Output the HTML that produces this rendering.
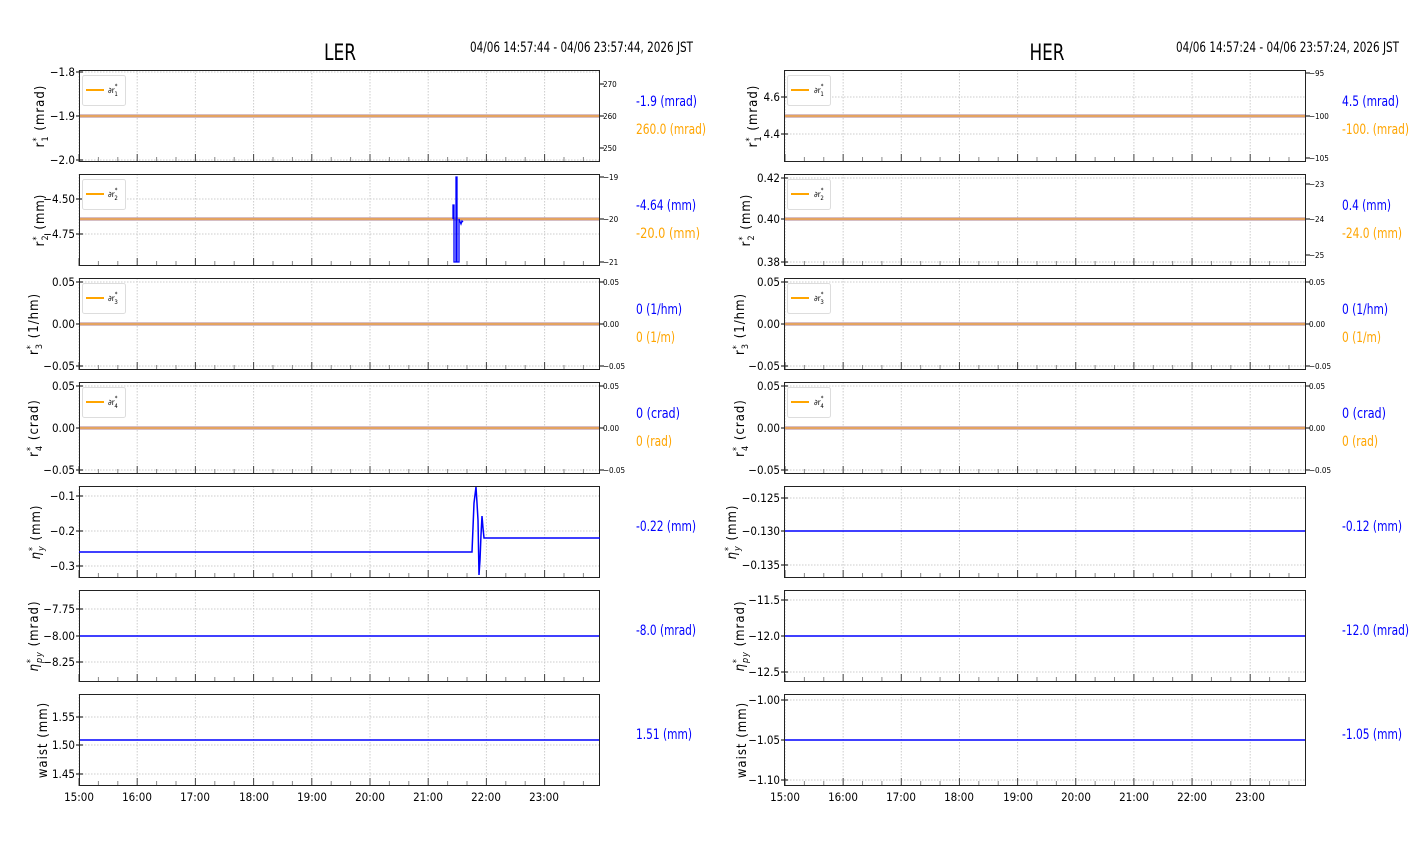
<!DOCTYPE html>
<html><head><meta charset="utf-8"><style>
html,body{margin:0;padding:0;background:#fff;}
svg{display:block;}
text{font-family:"DejaVu Sans Condensed","Liberation Sans Narrow","Liberation Sans",sans-serif;}
.t{font-size:11.5px;fill:#000;}
.s{font-size:8px;fill:#000;}
.yl{font-family:"DejaVu Sans","Liberation Sans",sans-serif;font-size:13px;letter-spacing:1px;}
.vb{font-size:14px;fill:#0000ff;}
.vo{font-size:14px;fill:#ffa500;}
.ttl{font-size:22px;}
.rng{font-size:14px;}
</style></head><body>
<svg id="s" width="1412" height="864" viewBox="0 0 1412 864" xmlns="http://www.w3.org/2000/svg">
<g id="g"></g>
<text class="ttl" x="340" y="60" text-anchor="middle" textLength="32" lengthAdjust="spacingAndGlyphs">LER</text>
<text class="rng" x="470" y="52" textLength="223" lengthAdjust="spacingAndGlyphs">04/06 14:57:44 - 04/06 23:57:44, 2026 JST</text>
<text class="ttl" x="1047" y="60" text-anchor="middle" textLength="35" lengthAdjust="spacingAndGlyphs">HER</text>
<text class="rng" x="1176" y="52" textLength="223" lengthAdjust="spacingAndGlyphs">04/06 14:57:24 - 04/06 23:57:24, 2026 JST</text>

<g class="t" text-anchor="end">
<text x="75" y="76">−1.8</text><text x="75" y="120">−1.9</text><text x="75" y="164">−2.0</text>
<text x="75" y="203">−4.50</text><text x="75" y="238">−4.75</text>
<text x="75" y="286">0.05</text><text x="75" y="328">0.00</text><text x="75" y="370">−0.05</text>
<text x="75" y="390">0.05</text><text x="75" y="432">0.00</text><text x="75" y="474">−0.05</text>
<text x="75" y="500">−0.1</text><text x="75" y="535">−0.2</text><text x="75" y="570">−0.3</text>
<text x="75" y="613">−7.75</text><text x="75" y="640">−8.00</text><text x="75" y="666">−8.25</text>
<text x="75" y="721">1.55</text><text x="75" y="749">1.50</text><text x="75" y="778">1.45</text>
</g>
<g class="s">
<text x="603" y="87">270</text><text x="603" y="119">260</text><text x="603" y="151">250</text>
<text x="603" y="180">−19</text><text x="603" y="222">−20</text><text x="603" y="265">−21</text>
<text x="603" y="285">0.05</text><text x="603" y="327">0.00</text><text x="603" y="369">−0.05</text>
<text x="603" y="389">0.05</text><text x="603" y="431">0.00</text><text x="603" y="473">−0.05</text>
</g>
<g class="t" text-anchor="end">
<text x="780" y="101">4.6</text><text x="780" y="138">4.4</text>
<text x="780" y="182">0.42</text><text x="780" y="223">0.40</text><text x="780" y="266">0.38</text>
<text x="780" y="286">0.05</text><text x="780" y="328">0.00</text><text x="780" y="370">−0.05</text>
<text x="780" y="390">0.05</text><text x="780" y="432">0.00</text><text x="780" y="474">−0.05</text>
<text x="780" y="502">−0.125</text><text x="780" y="535">−0.130</text><text x="780" y="569">−0.135</text>
<text x="780" y="604">−11.5</text><text x="780" y="640">−12.0</text><text x="780" y="676">−12.5</text>
<text x="780" y="704">−1.00</text><text x="780" y="744">−1.05</text><text x="780" y="784">−1.10</text>
</g>
<g class="s">
<text x="1309" y="76">−95</text><text x="1309" y="119">−100</text><text x="1309" y="161">−105</text>
<text x="1309" y="187">−23</text><text x="1309" y="222">−24</text><text x="1309" y="258">−25</text>
<text x="1309" y="285">0.05</text><text x="1309" y="327">0.00</text><text x="1309" y="369">−0.05</text>
<text x="1309" y="389">0.05</text><text x="1309" y="431">0.00</text><text x="1309" y="473">−0.05</text>
</g>

<g class="t" text-anchor="middle">
<text x="79" y="801">15:00</text><text x="137" y="801">16:00</text><text x="195" y="801">17:00</text><text x="254" y="801">18:00</text><text x="312" y="801">19:00</text><text x="370" y="801">20:00</text><text x="428" y="801">21:00</text><text x="486" y="801">22:00</text><text x="544" y="801">23:00</text>
<text x="785" y="801">15:00</text><text x="843" y="801">16:00</text><text x="901" y="801">17:00</text><text x="959" y="801">18:00</text><text x="1018" y="801">19:00</text><text x="1076" y="801">20:00</text><text x="1134" y="801">21:00</text><text x="1192" y="801">22:00</text><text x="1250" y="801">23:00</text>
</g>

<g class="yl" text-anchor="middle">
<text transform="translate(44,116) rotate(-90)">r<tspan font-size="9" dy="-5">*</tspan><tspan font-size="9" dx="-5" dy="9">1</tspan><tspan dy="-4"> (mrad)</tspan></text>
<text transform="translate(44,220) rotate(-90)">r<tspan font-size="9" dy="-5">*</tspan><tspan font-size="9" dx="-5" dy="9">2</tspan><tspan dy="-4"> (mm)</tspan></text>
<text transform="translate(38,324) rotate(-90)">r<tspan font-size="9" dy="-5">*</tspan><tspan font-size="9" dx="-5" dy="9">3</tspan><tspan dy="-4"> (1/hm)</tspan></text>
<text transform="translate(38,428) rotate(-90)">r<tspan font-size="9" dy="-5">*</tspan><tspan font-size="9" dx="-5" dy="9">4</tspan><tspan dy="-4"> (crad)</tspan></text>
<text transform="translate(40,532) rotate(-90)"><tspan font-style="italic">η</tspan><tspan font-size="9" dy="-5">*</tspan><tspan font-size="9" font-style="italic" dx="-5" dy="9">y</tspan><tspan dy="-4"> (mm)</tspan></text>
<text transform="translate(38,636) rotate(-90)"><tspan font-style="italic">η</tspan><tspan font-size="9" dy="-5">*</tspan><tspan font-size="9" font-style="italic" dx="-5" dy="9">py</tspan><tspan dy="-4"> (mrad)</tspan></text>
<text transform="translate(47,740) rotate(-90)">waist (mm)</text>

<text transform="translate(757,116) rotate(-90)">r<tspan font-size="9" dy="-5">*</tspan><tspan font-size="9" dx="-5" dy="9">1</tspan><tspan dy="-4"> (mrad)</tspan></text>
<text transform="translate(750,220) rotate(-90)">r<tspan font-size="9" dy="-5">*</tspan><tspan font-size="9" dx="-5" dy="9">2</tspan><tspan dy="-4"> (mm)</tspan></text>
<text transform="translate(744,324) rotate(-90)">r<tspan font-size="9" dy="-5">*</tspan><tspan font-size="9" dx="-5" dy="9">3</tspan><tspan dy="-4"> (1/hm)</tspan></text>
<text transform="translate(744,428) rotate(-90)">r<tspan font-size="9" dy="-5">*</tspan><tspan font-size="9" dx="-5" dy="9">4</tspan><tspan dy="-4"> (crad)</tspan></text>
<text transform="translate(736,532) rotate(-90)"><tspan font-style="italic">η</tspan><tspan font-size="9" dy="-5">*</tspan><tspan font-size="9" font-style="italic" dx="-5" dy="9">y</tspan><tspan dy="-4"> (mm)</tspan></text>
<text transform="translate(744,636) rotate(-90)"><tspan font-style="italic">η</tspan><tspan font-size="9" dy="-5">*</tspan><tspan font-size="9" font-style="italic" dx="-5" dy="9">py</tspan><tspan dy="-4"> (mrad)</tspan></text>
<text transform="translate(746,740) rotate(-90)">waist (mm)</text>
</g>

<g id="leg"></g>
<g class="s">
<text x="108" y="93">∂r<tspan font-size="6" dy="-5">*</tspan><tspan font-size="6" dx="-3" dy="8">1</tspan></text>
<text x="108" y="197">∂r<tspan font-size="6" dy="-5">*</tspan><tspan font-size="6" dx="-3" dy="8">2</tspan></text>
<text x="108" y="301">∂r<tspan font-size="6" dy="-5">*</tspan><tspan font-size="6" dx="-3" dy="8">3</tspan></text>
<text x="108" y="405">∂r<tspan font-size="6" dy="-5">*</tspan><tspan font-size="6" dx="-3" dy="8">4</tspan></text>
<text x="814" y="93">∂r<tspan font-size="6" dy="-5">*</tspan><tspan font-size="6" dx="-3" dy="8">1</tspan></text>
<text x="814" y="197">∂r<tspan font-size="6" dy="-5">*</tspan><tspan font-size="6" dx="-3" dy="8">2</tspan></text>
<text x="814" y="301">∂r<tspan font-size="6" dy="-5">*</tspan><tspan font-size="6" dx="-3" dy="8">3</tspan></text>
<text x="814" y="405">∂r<tspan font-size="6" dy="-5">*</tspan><tspan font-size="6" dx="-3" dy="8">4</tspan></text>
</g>

<g lengthAdjust="spacingAndGlyphs">
<text class="vb" x="636" y="106" textLength="61" lengthAdjust="spacingAndGlyphs">-1.9 (mrad)</text><text class="vo" x="636" y="134" textLength="70" lengthAdjust="spacingAndGlyphs">260.0 (mrad)</text>
<text class="vb" x="636" y="210" textLength="60" lengthAdjust="spacingAndGlyphs">-4.64 (mm)</text><text class="vo" x="636" y="238" textLength="64" lengthAdjust="spacingAndGlyphs">-20.0 (mm)</text>
<text class="vb" x="636" y="314" textLength="46" lengthAdjust="spacingAndGlyphs">0 (1/hm)</text><text class="vo" x="636" y="342" textLength="39" lengthAdjust="spacingAndGlyphs">0 (1/m)</text>
<text class="vb" x="636" y="418" textLength="44" lengthAdjust="spacingAndGlyphs">0 (crad)</text><text class="vo" x="636" y="446" textLength="36" lengthAdjust="spacingAndGlyphs">0 (rad)</text>
<text class="vb" x="636" y="531" textLength="60" lengthAdjust="spacingAndGlyphs">-0.22 (mm)</text>
<text class="vb" x="636" y="635" textLength="60" lengthAdjust="spacingAndGlyphs">-8.0 (mrad)</text>
<text class="vb" x="636" y="739" textLength="56" lengthAdjust="spacingAndGlyphs">1.51 (mm)</text>

<text class="vb" x="1342" y="106" textLength="57" lengthAdjust="spacingAndGlyphs">4.5 (mrad)</text><text class="vo" x="1342" y="134" textLength="67" lengthAdjust="spacingAndGlyphs">-100. (mrad)</text>
<text class="vb" x="1342" y="210" textLength="49" lengthAdjust="spacingAndGlyphs">0.4 (mm)</text><text class="vo" x="1342" y="238" textLength="60" lengthAdjust="spacingAndGlyphs">-24.0 (mm)</text>
<text class="vb" x="1342" y="314" textLength="46" lengthAdjust="spacingAndGlyphs">0 (1/hm)</text><text class="vo" x="1342" y="342" textLength="39" lengthAdjust="spacingAndGlyphs">0 (1/m)</text>
<text class="vb" x="1342" y="418" textLength="44" lengthAdjust="spacingAndGlyphs">0 (crad)</text><text class="vo" x="1342" y="446" textLength="36" lengthAdjust="spacingAndGlyphs">0 (rad)</text>
<text class="vb" x="1342" y="531" textLength="60" lengthAdjust="spacingAndGlyphs">-0.12 (mm)</text>
<text class="vb" x="1342" y="635" textLength="67" lengthAdjust="spacingAndGlyphs">-12.0 (mrad)</text>
<text class="vb" x="1342" y="739" textLength="60" lengthAdjust="spacingAndGlyphs">-1.05 (mm)</text>
</g>
</svg>
<script>
(function(){
var NS="http://www.w3.org/2000/svg",g=document.getElementById('g'),lg=document.getElementById('leg');
function el(p,t,a){var e=document.createElementNS(NS,t);for(var k in a)e.setAttribute(k,a[k]);p.appendChild(e);return e;}
var tops=[70,174,278,382,486,590,694],H=92;
var L={x0:79,x1:600,h0:79,dh:58.2,
 yt:[[72,116,160],[199,234],[282,324,366],[386,428,470],[496,531,566],[609,636,662],[717,745,774]],
 rt:[[84,116,148],[177,219,262],[282,324,366],[386,428,470]],
 line:[116,219,324,428,null,636,740]};
var R={x0:784,x1:1306,h0:785,dh:58.15,
 yt:[[97,134],[178,219,262],[282,324,366],[386,428,470],[498,531,565],[600,636,672],[700,740,780]],
 rt:[[73,116,158],[184,219,255],[282,324,366],[386,428,470]],
 line:[116,219,324,428,531,636,740]};
[L,R].forEach(function(P){
 for(var i=0;i<7;i++){
  var t=tops[i],b=t+H;
  for(var h=0;h<9;h++){var x=P.h0+P.dh*h;el(g,'line',{x1:x,x2:x,y1:t,y2:b,stroke:'#ccc','stroke-width':1,'stroke-dasharray':'1.5,1.5'});}
  P.yt[i].forEach(function(y){el(g,'line',{x1:P.x0,x2:P.x1,y1:y,y2:y,stroke:'#ccc','stroke-width':1,'stroke-dasharray':'1.5,1.5'});
   el(g,'line',{x1:P.x0,x2:P.x0+4,y1:y,y2:y,stroke:'#000','stroke-width':1});
   el(g,'line',{x1:P.x0-3,x2:P.x0,y1:y,y2:y,stroke:'#000','stroke-width':1});});
  for(var m=0;m<27;m++){var x=P.h0+P.dh*m/3;if(x>P.x1)break;var maj=m%3==0;
   el(g,'line',{x1:x,x2:x,y1:b,y2:b-(maj?8:5),stroke:maj?'#444':'#888','stroke-width':1});}
  if(i<4){P.rt[i].forEach(function(y){el(g,'line',{x1:P.x1,x2:P.x1+4,y1:y,y2:y,stroke:'#000','stroke-width':1});});
   el(lg,'rect',{x:P.x0+3.5,y:t+5.5,width:43,height:30,rx:2,fill:'#fff',stroke:'#ddd','stroke-width':1});
   el(lg,'line',{x1:P.x0+7,x2:P.x0+25,y1:t+20,y2:t+20,stroke:'#ffa500','stroke-width':2});
  }
  var y=P.line[i];
  if(i<4){el(g,'line',{x1:P.x0,x2:P.x1,y1:y,y2:y,stroke:'#c8a8b0','stroke-width':3.5});
   el(g,'line',{x1:P.x0,x2:P.x1,y1:y,y2:y,stroke:'#f5a030','stroke-width':1.3});}
  else if(y!==null){el(g,'line',{x1:P.x0,x2:P.x1,y1:y,y2:y,stroke:'#0000ff','stroke-width':1.5});}
  el(g,'rect',{x:P.x0+0.5,y:t+0.5,width:P.x1-P.x0-1,height:H-1,fill:'none',stroke:'#222','stroke-width':1});
 }
});
el(g,'path',{d:'M453,219 L453,205 L454,205 L454,262 L456,262 L456,177 L457,177 L457,262 L459,262 L459,219 L461,224 L462,221 L463,222',fill:'none',stroke:'#0000ff','stroke-width':1.3});
el(g,'path',{d:'M79,552 L472,552 L474,503 L475,495 L476,487 L477,503 L478,520 L479,575 L480,560 L481,535 L482,516 L483,528 L484,538 L600,538',fill:'none',stroke:'#0000ff','stroke-width':1.5});
})();
</script>
</body></html>
